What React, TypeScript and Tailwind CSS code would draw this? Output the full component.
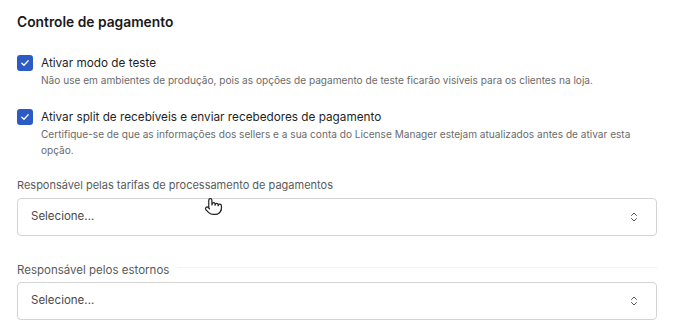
import React from "react";
import { ChevronsUpDown, Pointer } from "lucide-react";

function Check() {
  return (
    <div className="w-[16px] h-[16px] shrink-0 rounded-[3px] bg-[#2d5bc6] flex items-center justify-center">
      <svg width="10" height="10" viewBox="0 0 10 10" fill="none">
        <path d="M1.8 5.2 L4 7.3 L8.2 2.8" stroke="white" strokeWidth="1.3" strokeLinecap="round" strokeLinejoin="round" />
      </svg>
    </div>
  );
}

function Select() {
  return (
    <div className="h-[38px] w-[640px] rounded-[4px] border border-[#d4d4d4] bg-white flex items-center justify-between pl-[13px] pr-[16px]">
      <span className="text-[11.5px] text-[#4a4a4a]">Selecione...</span>
      <ChevronsUpDown size={12} strokeWidth={2} className="text-[#555]" />
    </div>
  );
}

export default function App() {
  return (
    <div className="relative w-[686px] h-[327px] bg-white pt-[13px] px-[17px] overflow-hidden" style={{ fontFamily: "Inter, 'Noto Sans', sans-serif" }}>
      <h2 className="text-[13.8px] leading-[18px] font-semibold text-[#1a1a1a]">Controle de pagamento</h2>

      <div className="mt-[24px] flex gap-[8px]">
        <Check />
        <div>
          <div className="text-[11.75px] leading-[16px] text-[#1f1f1f]">Ativar modo de teste</div>
          <div className="mt-[1px] text-[10.1px] leading-[16px] text-[#6b6b6b]">
            Não use em ambientes de produção, pois as opções de pagamento de teste ficarão visíveis para os clientes na loja.
          </div>
        </div>
      </div>

      <div className="mt-[21px] flex gap-[8px]">
        <Check />
        <div>
          <div className="text-[11.75px] leading-[16px] text-[#1f1f1f]">Ativar split de recebíveis e enviar recebedores de pagamento</div>
          <div className="mt-[1px] w-[610px] text-[10.1px] leading-[16px] text-[#6b6b6b]">
            Certifique-se de que as informações dos sellers e a sua conta do License Manager estejam atualizados antes de ativar esta opção.
          </div>
        </div>
      </div>

      <div className="mt-[19px] text-[11px] leading-[16px] text-[#5a5a5a]">Responsável pelas tarifas de processamento de pagamentos</div>
      <div className="mt-[5px]">
        <Select />
      </div>

      <div className="mt-[26px] w-[640px] flex items-center gap-[8px]">
        <span className="text-[11.5px] leading-[16px] text-[#5a5a5a]">Responsável pelos estornos</span>
        <div className="flex-1 h-px bg-[#f2f2f2] mt-[-6px]" />
      </div>
      <div className="mt-[4px]">
        <Select />
      </div>

      <div className="absolute left-[204px] top-[197px]">
        <Pointer size={19} strokeWidth={1.5} className="text-[#222] fill-white" />
      </div>
    </div>
  );
}
